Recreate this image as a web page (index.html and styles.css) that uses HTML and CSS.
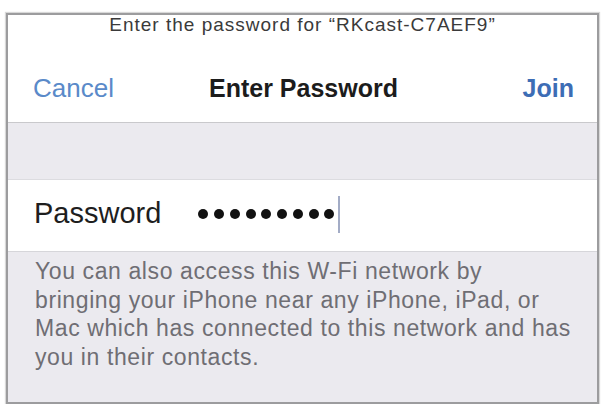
FILE: index.html
```html
<!DOCTYPE html>
<html lang="en">
<head>
<meta charset="utf-8">
<title>Enter Password</title>
<link rel="stylesheet" href="styles.css">
</head>
<body>
  <div class="sheet">
    <p class="prompt">Enter the password for “RKcast-C7AEF9”</p>
    <div class="nav">
      <span class="nav-btn cancel">Cancel</span>
      <span class="nav-title">Enter Password</span>
      <span class="nav-btn join">Join</span>
    </div>
    <div class="spacer"></div>
    <div class="field-row">
      <span class="field-label">Password</span>
      <span class="dots" aria-label="password">
        <i></i><i></i><i></i><i></i><i></i><i></i><i></i><i></i><i></i>
      </span>
      <span class="caret"></span>
    </div>
    <p class="footnote">You can also access this W-Fi network by<br>bringing your iPhone near any iPhone, iPad, or<br>Mac which has connected to this network and has<br>you in their contacts.</p>
  </div>
</body>
</html>
```

FILE: styles.css
```css
* {
  box-sizing: border-box;
}

body {
  margin: 0;
  background: #ffffff;
  font-family: "Liberation Sans", Arial, sans-serif;
}

.sheet {
  margin: 13px 8px 0 6px;
  width: 593px;
  height: 391px;
  border: 2px solid #9c9c9e;
  box-shadow: 0 0 1px 1px #d8d8d8;
  background: #ffffff;
  display: flex;
  flex-direction: column;
}

.prompt {
  margin: 0;
  font-size: 19px;
  line-height: 19px;
  letter-spacing: 1px;
  text-align: center;
  color: #3a3a3a;
}

.nav {
  display: grid;
  grid-template-columns: 1fr auto 1fr;
  align-items: center;
  padding: 39px 23px 19px 25px;
  border-bottom: 1px solid #c9c9cc;
  line-height: 30px;
}

.nav-btn {
  font-size: 26px;
}

.cancel {
  color: #5a8ac9;
  justify-self: start;
}

.join {
  color: #3d6db5;
  font-weight: bold;
  font-size: 25px;
  justify-self: end;
}

.nav-title {
  font-size: 25px;
  font-weight: bold;
  color: #1c1c1c;
}

.spacer {
  height: 57px;
  background: #ebeaef;
  border-bottom: 1px solid #dcdce0;
}

.field-row {
  height: 72px;
  display: flex;
  align-items: center;
  padding: 0 0 5px 26px;
  border-bottom: 1px solid #d6d6da;
}

.field-label {
  font-size: 29px;
  color: #1e1e1e;
}

.dots {
  display: flex;
  gap: 5.75px;
  margin-left: 37px;
  margin-top: 2px;
}

.dots i {
  width: 10px;
  height: 10px;
  border-radius: 50%;
  background: #111111;
}

.caret {
  width: 2px;
  height: 37px;
  margin-left: 4px;
  margin-top: 2px;
  background: #a3acc6;
}

.footnote {
  flex: 1;
  margin: 0;
  padding: 5px 10px 0 27px;
  background: #ebeaef;
  font-size: 23px;
  line-height: 28.7px;
  letter-spacing: 0.6px;
  color: #6f6e74;
}
```
